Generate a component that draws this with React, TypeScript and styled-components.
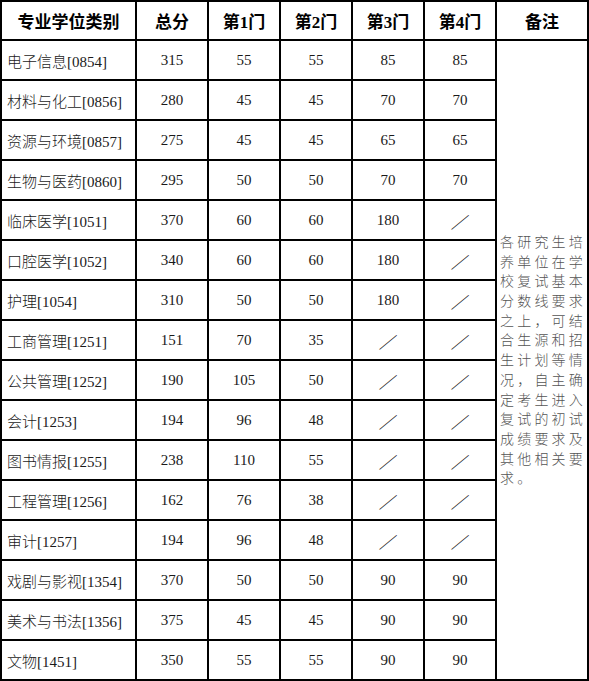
import styled, { createGlobalStyle } from 'styled-components';

const GlobalStyle = createGlobalStyle`
  html, body {
    margin: 0;
    padding: 0;
    background: #fff;
  }
`;

const Grid = styled.div`
  display: grid;
  grid-template-columns: 133px 70px 70px 70px 70px 70px 90px;
  grid-template-rows: 37px;
  grid-auto-rows: 38px;
  gap: 2px;
  padding: 2px;
  width: max-content;
  background: #000;
  font-family: 'Liberation Serif', 'Noto Sans CJK SC', serif;
`;

const HeadCell = styled.div`
  display: flex;
  align-items: center;
  justify-content: center;
  background: #fff;
  color: #000;
  font-size: 17px;
  font-weight: bold;
`;

const Cell = styled.div<{ $left?: boolean }>`
  display: flex;
  align-items: center;
  justify-content: ${(p) => (p.$left ? 'flex-start' : 'center')};
  padding-left: ${(p) => (p.$left ? '5px' : '0')};
  background: #fff;
  color: #1a1a1a;
  font-size: 15px;
  font-weight: ${(p) => (p.$left ? 300 : 400)};
  white-space: nowrap;
`;

const Slash = styled.span`
  display: inline-block;
  font-family: 'Noto Sans CJK SC', sans-serif;
  font-weight: 300;
  font-size: 16px;
  color: #222;
  transform: scaleX(1.2) translateY(1px);
`;

const Remark = styled.div`
  grid-column: 7;
  grid-row: 2 / span 16;
  display: flex;
  align-items: center;
  background: #fff;
  padding-left: 3px;
  color: #555;
  font-family: 'Noto Sans CJK SC', sans-serif;
  font-size: 14px;
  font-weight: 300;
  line-height: 19.7px;
  letter-spacing: 3.2px;
  word-break: break-all;
`;

const headers = ['专业学位类别', '总分', '第1门', '第2门', '第3门', '第4门', '备注'];

const rows: string[][] = [
  ['电子信息[0854]', '315', '55', '55', '85', '85'],
  ['材料与化工[0856]', '280', '45', '45', '70', '70'],
  ['资源与环境[0857]', '275', '45', '45', '65', '65'],
  ['生物与医药[0860]', '295', '50', '50', '70', '70'],
  ['临床医学[1051]', '370', '60', '60', '180', '／'],
  ['口腔医学[1052]', '340', '60', '60', '180', '／'],
  ['护理[1054]', '310', '50', '50', '180', '／'],
  ['工商管理[1251]', '151', '70', '35', '／', '／'],
  ['公共管理[1252]', '190', '105', '50', '／', '／'],
  ['会计[1253]', '194', '96', '48', '／', '／'],
  ['图书情报[1255]', '238', '110', '55', '／', '／'],
  ['工程管理[1256]', '162', '76', '38', '／', '／'],
  ['审计[1257]', '194', '96', '48', '／', '／'],
  ['戏剧与影视[1354]', '370', '50', '50', '90', '90'],
  ['美术与书法[1356]', '375', '45', '45', '90', '90'],
  ['文物[1451]', '350', '55', '55', '90', '90'],
];

const remark =
  '各研究生培养单位在学校复试基本分数线要求之上，可结合生源和招生计划等情况，自主确定考生进入复试的初试成绩要求及其他相关要求。';

export default function App() {
  return (
    <>
      <GlobalStyle />
      <Grid>
        {headers.map((h) => (
          <HeadCell key={h}>{h}</HeadCell>
        ))}
        {rows.map((r, i) =>
          r.map((v, j) => (
            <Cell key={`${i}-${j}`} $left={j === 0} style={{ gridRow: i + 2, gridColumn: j + 1 }}>
              {v === '／' ? <Slash>／</Slash> : v}
            </Cell>
          ))
        )}
        <Remark>{remark}</Remark>
      </Grid>
    </>
  );
}
